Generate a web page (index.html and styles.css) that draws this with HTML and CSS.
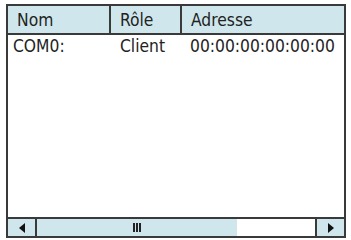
FILE: index.html
```html
<!DOCTYPE html>
<html lang="fr">
<head>
    <meta charset="UTF-8">
    <title>Liste des ports</title>
    <link rel="stylesheet" href="styles.css">
</head>
<body>
    <div class="listview">
        <div class="header">
            <div class="col col-nom">Nom</div>
            <div class="col col-role">Rôle</div>
            <div class="col col-addr">Adresse</div>
        </div>
        <div class="rows">
            <div class="row">
                <div class="cell col-nom">COM0:</div>
                <div class="cell col-role">Client</div>
                <div class="cell col-addr">00:00:00:00:00:00</div>
            </div>
        </div>
        <div class="hscroll">
            <div class="btn btn-left"><span class="arrow-left"></span></div>
            <div class="thumb"><span class="grip"></span></div>
            <div class="track"></div>
            <div class="btn btn-right"><span class="arrow-right"></span></div>
        </div>
    </div>
</body>
</html>
```
FILE: styles.css
```css
body {
    margin: 0;
    background: #fff;
    font-family: "DejaVu Sans Condensed", "DejaVu Sans", sans-serif;
    font-size: 17.3px;
    color: #222;
}
.listview {
    margin: 4px 0 0 6px;
    width: 336px;
    height: 230px;
    border: 2px solid #3a3a3a;
    display: flex;
    flex-direction: column;
    background: #fff;
}
.header {
    display: flex;
    height: 27px;
    background: #cfe7ec;
    border-bottom: 2px solid #3a3a3a;
}
.col {
    padding-left: 9px;
    padding-top: 2px;
    line-height: 25px;
}
.col-nom {
    width: 103px;
    box-sizing: border-box;
}
.col-role {
    width: 71px;
    box-sizing: border-box;
}
.col-addr {
    flex: 1;
}
.header .col-nom,
.header .col-role {
    border-right: 2px solid #3a3a3a;
}
.rows {
    flex: 1;
}
.row {
    display: flex;
    height: 23px;
    line-height: 23px;
}
.cell {
    padding-left: 5px;
    white-space: nowrap;
}
.row .col-role {
    padding-left: 9px;
}
.row .col-addr {
    padding-left: 8px;
}
.hscroll {
    display: flex;
    height: 17px;
    border-top: 2px solid #3a3a3a;
}
.btn {
    width: 27px;
    background: #cfe7ec;
    display: flex;
    align-items: center;
    justify-content: center;
}
.btn-left {
    border-right: 2px solid #3a3a3a;
}
.btn-right {
    border-left: 2px solid #3a3a3a;
}
.arrow-left {
    border-top: 5px solid transparent;
    border-bottom: 5px solid transparent;
    border-right: 6px solid #111;
}
.arrow-right {
    border-top: 5px solid transparent;
    border-bottom: 5px solid transparent;
    border-left: 6px solid #111;
}
.thumb {
    width: 200px;
    background: #cfe7ec;
    display: flex;
    align-items: center;
    justify-content: center;
}
.grip {
    width: 2px;
    height: 9px;
    background: #222;
    box-shadow: 3px 0 0 #222, 6px 0 0 #222;
    margin-right: 6px;
}
.track {
    flex: 1;
    background: #fff;
}
```
